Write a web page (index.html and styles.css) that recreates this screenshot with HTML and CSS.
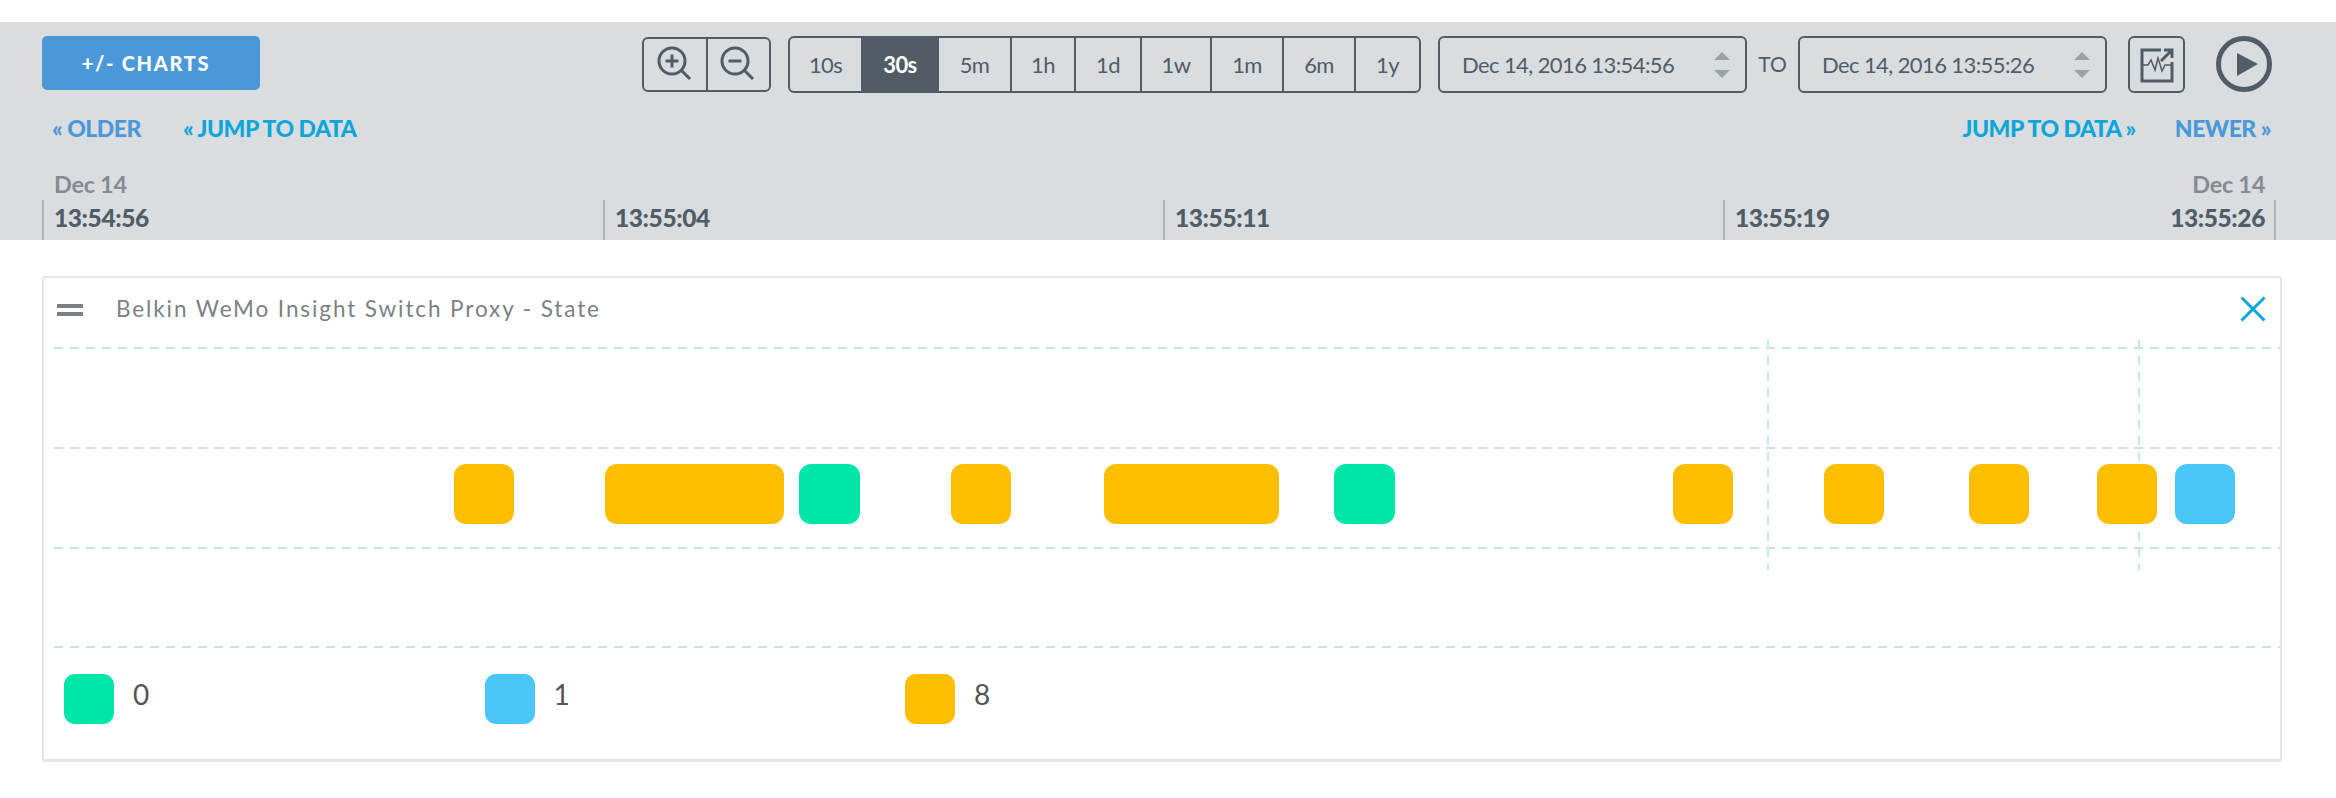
FILE: index.html
```html
<!doctype html>
<html lang="en">
<head>
 <meta charset="UTF-8">
 <title>Belkin WeMo Insight Switch Proxy - State</title>
 <link rel="stylesheet" href="styles.css">
</head>
<body>
<div class="controls">
 <div class="toolbar">
  <button class="charts-btn">+/- CHARTS</button>
  <div class="seg seg-zoom">
   <span class="seg-item">
    <svg width="36" height="36" viewBox="0 0 36 36" fill="none" stroke="#525c66" stroke-width="3"><circle cx="15" cy="15" r="13"/><path d="M24.500 24.500L33 33M15 8.500V21.500M8.500 15H21.500"/></svg>
   </span>
   <span class="seg-item">
    <svg width="36" height="36" viewBox="0 0 36 36" fill="none" stroke="#525c66" stroke-width="3"><circle cx="15" cy="15" r="13"/><path d="M24.500 24.500L33 33M8.500 15H21.500"/></svg>
   </span>
  </div>
  <div class="seg seg-range">
   <span class="seg-item w1">10s</span>
   <span class="seg-item w2 active">30s</span>
   <span class="seg-item w3">5m</span>
   <span class="seg-item w4">1h</span>
   <span class="seg-item w5">1d</span>
   <span class="seg-item w6">1w</span>
   <span class="seg-item w7">1m</span>
   <span class="seg-item w7">6m</span>
   <span class="seg-item w8">1y</span>
  </div>
  <div class="date-input">
   <span>Dec 14, 2016 13:54:56</span>
   <i class="spin"><b class="up"></b><b class="down"></b></i>
  </div>
  <span class="to">TO</span>
  <div class="date-input">
   <span>Dec 14, 2016 13:55:26</span>
   <i class="spin"><b class="up"></b><b class="down"></b></i>
  </div>
  <span class="export-btn">
   <svg width="34" height="36" viewBox="0 0 34 36" fill="none" stroke="#525c66"><path stroke-width="3" d="M21 3H2V34H32V15"/><path stroke-width="1.500" d="M2 18H8L11 13L15 23L18 11L22 24L25 18H32"/><path stroke-width="3" d="M21 14L31 4M24 3H32V11"/></svg>
  </span>
  <svg class="play" width="56" height="56" viewBox="0 0 56 56"><circle cx="28" cy="28" r="25.500" fill="none" stroke="#525c66" stroke-width="5"/><path fill="#525c66" d="M21 17L42 28L21 40Z"/></svg>
 </div>

 <div class="jump-row">
  <a class="older first">« OLDER</a>
  <a class="jump">« JUMP TO DATA</a>
  <a class="jump push">JUMP TO DATA »</a>
  <a class="older">NEWER »</a>
 </div>

 <div class="timeline">
  <div class="tick"><em>Dec 14</em><strong>13:54:56</strong></div>
  <div class="tick"><strong>13:55:04</strong></div>
  <div class="tick"><strong>13:55:11</strong></div>
  <div class="tick"><strong>13:55:19</strong></div>
  <div class="tick tick-end"><em>Dec 14</em><strong>13:55:26</strong></div>
 </div>
</div>

<div class="card">
 <div class="card-head">
  <i class="burger"></i>
  <span class="card-title">Belkin WeMo Insight Switch Proxy - State</span>
  <svg class="close" width="26" height="26" viewBox="0 0 26 26" fill="none" stroke="#0ea5d8" stroke-width="3"><path d="M1.500 1.500L24.500 24.500M24.500 1.500L1.500 24.500"/></svg>
 </div>
 <svg class="plot" width="2236" height="316" viewBox="44 340 2236 316">
  <g class="h-lines">
   <path d="M54 348H2280"/>
   <path d="M54 448H2280"/>
   <path d="M54 548H2280"/>
   <path d="M54 647H2280"/>
  </g>
  <g class="v-lines">
   <path d="M1768 340V570"/>
   <path d="M2139 340V570"/>
  </g>
  <g class="amber">
   <rect x="454" y="464" width="60" height="60" rx="12"/>
   <rect x="605" y="464" width="179" height="60" rx="12"/>
   <rect x="951" y="464" width="60" height="60" rx="12"/>
   <rect x="1104" y="464" width="175" height="60" rx="12"/>
   <rect x="1673" y="464" width="60" height="60" rx="12"/>
   <rect x="1824" y="464" width="60" height="60" rx="12"/>
   <rect x="1969" y="464" width="60" height="60" rx="12"/>
   <rect x="2097" y="464" width="60" height="60" rx="12"/>
  </g>
  <g class="green">
   <rect x="799" y="464" width="61" height="60" rx="12"/>
   <rect x="1334" y="464" width="61" height="60" rx="12"/>
  </g>
  <g class="blue">
   <rect x="2175" y="464" width="60" height="60" rx="12"/>
  </g>
 </svg>
 <div class="legend">
  <div class="legend-item"><i class="swatch c-green"></i><span>0</span></div>
  <div class="legend-item"><i class="swatch c-blue"></i><span>1</span></div>
  <div class="legend-item"><i class="swatch c-amber"></i><span>8</span></div>
 </div>
</div>
</body>
</html>
```

FILE: styles.css
```css
*{
 margin:0;
 padding:0;
 box-sizing:border-box;
}
body{
 background:#fff;
 font-family:"Lato","Noto Sans",sans-serif;
 color:#525c66;
 padding-top:22px;
 height:798px;
 overflow:hidden;
}
.controls{
 background:#d9dde0;
 height:218px;
 padding:14px 60px 0 42px;
}
.toolbar{
 display:flex;
 align-items:center;
 height:57px;
 padding-right:4px;
}
.charts-btn{
 width:218px;
 height:54px;
 margin-right:auto;
 margin-top:-3px;
 padding-right:10px;
 border:0;
 border-radius:5px;
 background:#4a98d8;
 color:#fff;
 font:900 20px "Lato",sans-serif;
 letter-spacing:1.700px;
}
.seg{
 display:flex;
 height:57px;
 border:2px solid #525c66;
 border-radius:6px;
 overflow:hidden;
 margin-right:17px;
}
.seg-zoom{
 height:55px;
 width:129px;
 margin-top:-1px;
}
.seg-item{
 display:flex;
 align-items:center;
 justify-content:center;
 flex:1;
 border-left:2px solid #525c66;
 font-size:22px;
 letter-spacing:-.6px;
}
.seg-item:first-child{
 border-left:0;
}
.seg-range{
 width:633px;
}
.seg-range .seg-item{
 flex:none;
}
.w1{width:71px;}
.w2{width:76px;}
.w3{width:73px;}
.w4{width:64px;}
.w5{width:66px;}
.w6{width:70px;}
.w7{width:72px;}
.w8{width:65px;}
.active{
 background:#525c66;
 color:#fff;
 font-weight:700;
}
.date-input{
 display:flex;
 align-items:center;
 justify-content:space-between;
 width:309px;
 height:57px;
 padding:0 15px 0 22px;
 border:2px solid #525c66;
 border-radius:6px;
 font-size:22px;
 letter-spacing:-.6px;
}
.spin{
 display:flex;
 flex-direction:column;
 gap:10px;
}
.spin b{
 display:block;
 width:0;
 height:0;
 border-left:8px solid transparent;
 border-right:8px solid transparent;
}
.spin .up{
 border-bottom:8px solid #9aa1a8;
}
.spin .down{
 border-top:8px solid #9aa1a8;
}
.to{
 width:51px;
 text-align:center;
 font-size:21px;
 margin-top:-3px;
}
.export-btn{
 display:flex;
 align-items:center;
 justify-content:center;
 width:57px;
 height:57px;
 margin-left:21px;
 border:2px solid #525c66;
 border-radius:6px;
}
.play{
 margin-left:31px;
 margin-top:-2px;
}
.jump-row{
 display:flex;
 gap:39px;
 margin-top:22px;
 padding:0 5px 0 10px;
 font-size:23px;
 font-weight:900;
 letter-spacing:-.5px;
 line-height:27px;
}
.older{
 color:#4a98d8;
}
.first{
 margin-right:3px;
}
.jump{
 color:#0ea5d8;
}
.push{
 margin-left:auto;
}
.timeline{
 display:grid;
 grid-template-columns:561px 560px 560px 1fr;
 margin-top:31px;
 height:67px;
}
.tick{
 align-self:end;
 height:40px;
 padding:4px 0 0 10px;
 border-left:2px solid #aeb2b7;
}
.tick strong{
 display:block;
 font-size:24.500px;
 font-weight:900;
 line-height:28px;
 letter-spacing:-.4px;
}
.tick em{
 display:block;
 height:0;
 font-style:normal;
 font-weight:700;
 font-size:23.500px;
 line-height:0;
 color:#868b92;
 transform:translateY(-20px);
 letter-spacing:-.3px;
}
.tick-end{
 grid-column:4;
 grid-row:1;
 justify-self:end;
 padding:4px 9px 0 0;
 border-left:0;
 border-right:2px solid #aeb2b7;
 text-align:right;
}
.tick:nth-child(4){
 grid-column:4;
 grid-row:1;
 justify-self:start;
}
.card{
 width:2240px;
 height:486px;
 margin:36px 0 0 42px;
 border:2px solid #e3e5e7;
 border-bottom-width:3px;
 border-radius:3px;
}
.card-head{
 display:flex;
 align-items:center;
 height:62px;
 padding:0 14px 0 13px;
}
.burger{
 width:26px;
 height:12px;
 border-top:4px solid #7c8087;
 border-bottom:4px solid #7c8087;
 margin-top:1px;
}
.card-title{
 margin:-2px auto 0 33px;
 font-size:22.500px;
 letter-spacing:1.900px;
 color:#7c8087;
}
.plot{
 display:block;
}
.h-lines path{
 stroke:#c5e3ec;
 stroke-width:2;
 stroke-dasharray:9 7;
 fill:none;
}
.v-lines path{
 stroke:#c5e6f4;
 stroke-width:2;
 stroke-dasharray:9 7;
 fill:none;
}
.amber rect{fill:#ffbf00;}
.green rect{fill:#00e6a8;}
.blue rect{fill:#4ac6f8;}
.legend{
 display:flex;
 padding:18px 0 0 20px;
}
.legend-item{
 display:flex;
 align-items:center;
 width:420.500px;
 font-size:28px;
 color:#555;
}
.legend-item span{
 margin-top:-10px;
}
.swatch{
 width:50px;
 height:50px;
 margin-right:19px;
 border-radius:11px;
}
.c-green{background:#00e6a8;}
.c-blue{background:#4ac6f8;}
.c-amber{background:#ffbf00;}
```
